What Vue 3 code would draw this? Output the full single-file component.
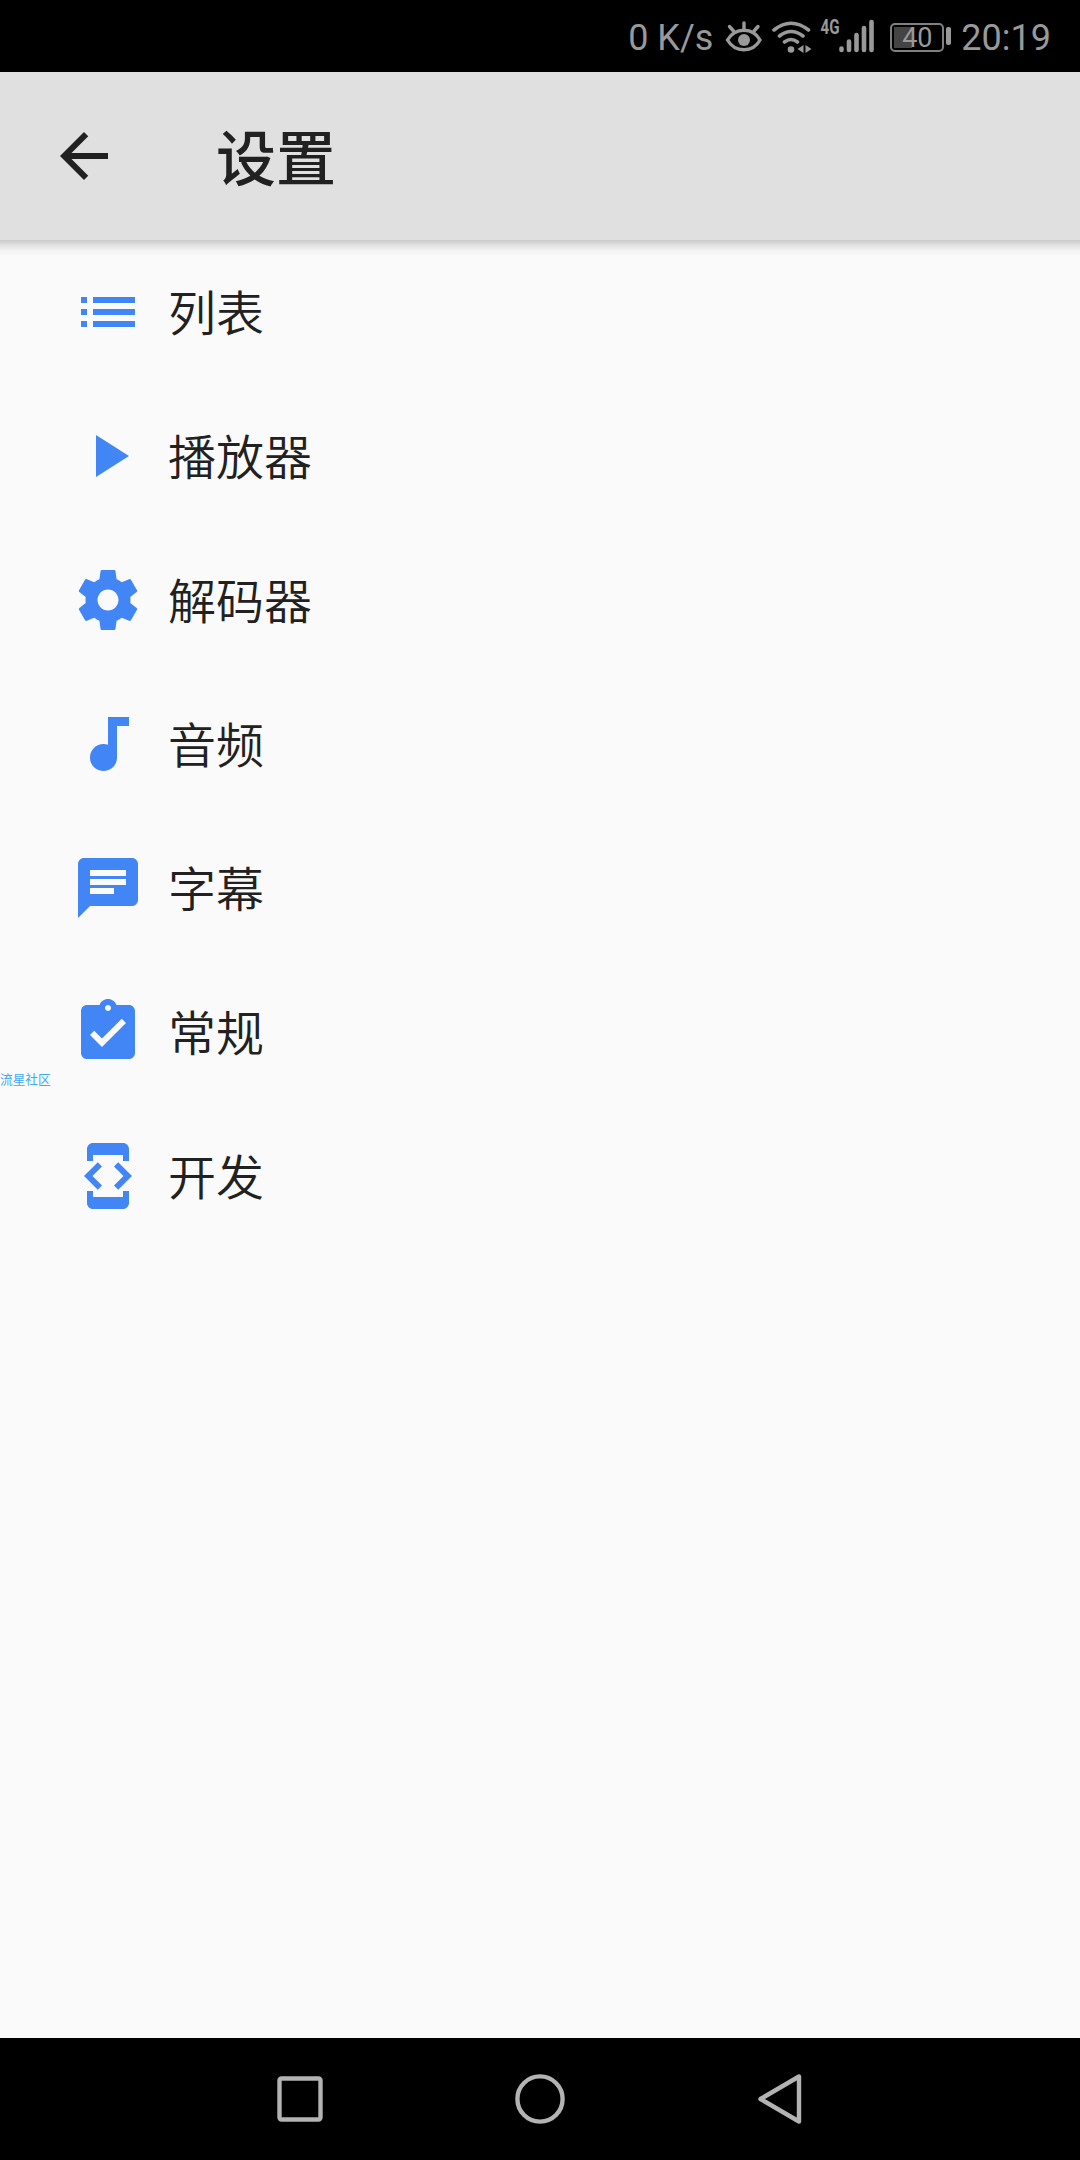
<script setup>
import { ref } from 'vue';

const items = ref([
  {
    label: '列表',
    path: 'M3 13h2v-2H3v2zm0 4h2v-2H3v2zm0-8h2V7H3v2zm4 4h14v-2H7v2zm0 4h14v-2H7v2zM7 7v2h14V7H7z',
  },
  {
    label: '播放器',
    path: 'M8 5v14l11-7z',
  },
  {
    label: '解码器',
    path: 'M19.43 12.98c.04-.32.07-.64.07-.98s-.03-.66-.07-.98l2.11-1.65c.19-.15.24-.42.12-.64l-2-3.46c-.12-.22-.39-.3-.61-.22l-2.49 1c-.52-.4-1.08-.73-1.69-.98l-.38-2.65C14.46 2.18 14.25 2 14 2h-4c-.25 0-.46.18-.49.42l-.38 2.65c-.61.25-1.17.59-1.69.98l-2.49-1c-.23-.09-.49 0-.61.22l-2 3.46c-.13.22-.07.49.12.64l2.11 1.65c-.04.32-.07.65-.07.98s.03.66.07.98l-2.11 1.65c-.19.15-.24.42-.12.64l2 3.46c.12.22.39.3.61.22l2.49-1c.52.4 1.08.73 1.69.98l.38 2.65c.03.24.24.42.49.42h4c.25 0 .46-.18.49-.42l.38-2.65c.61-.25 1.17-.59 1.69-.98l2.49 1c.23.09.49 0 .61-.22l2-3.46c.12-.22.07-.49-.12-.64l-2.11-1.65zM12 15.5c-1.93 0-3.5-1.57-3.5-3.5s1.57-3.5 3.5-3.5 3.5 1.57 3.5 3.5-1.57 3.5-3.5 3.5z',
  },
  {
    label: '音频',
    path: 'M12 3v9.26c-.5-.17-1-.26-1.5-.26C8 12 6 14 6 16.5S8 21 10.5 21s4.5-2 4.5-4.5V6h4V3h-7z',
  },
  {
    label: '字幕',
    path: 'M20 2H4c-1.1 0-1.99.9-1.99 2L2 22l4-4h14c1.1 0 2-.9 2-2V4c0-1.1-.9-2-2-2zM6 9h12v2H6V9zm8 5H6v-2h8v2zm4-6H6V6h12v2z',
  },
  {
    label: '常规',
    path: 'M19 3h-4.18C14.4 1.84 13.3 1 12 1c-1.3 0-2.4.84-2.82 2H5c-1.1 0-2 .9-2 2v14c0 1.1.9 2 2 2h14c1.1 0 2-.9 2-2V5c0-1.1-.9-2-2-2zm-7 0c.55 0 1 .45 1 1s-.45 1-1 1-1-.45-1-1 .45-1 1-1zm-2 14l-4-4 1.41-1.41L10 14.17l6.59-6.59L18 9l-8 8z',
  },
  {
    label: '开发',
    path: 'M7 5h10v2h2V3c0-1.1-.9-1.99-2-1.99L7 1c-1.1 0-2 .9-2 2v4h2V5zm8.41 11.59L20 12l-4.59-4.59L14 8.83 17.17 12 14 15.17l1.41 1.42zM10 15.17L6.83 12 10 8.83 8.59 7.41 4 12l4.59 4.59L10 15.17zM17 19H7v-2H5v4c0 1.1.9 2 2 2h10c1.1 0 2-.9 2-2v-4h-2v2z',
  },
]);
</script>

<template>
  <div class="screen">
    <div class="status-bar">
      <span class="speed">0 K/s</span>
      <svg class="eye" width="38" height="34" viewBox="0 0 38 34">
        <path d="M2.5 21C10 8 28 8 35 21C28 34 10 34 2.5 21Z" />
        <path d="M19 10V4M8.5 12L4.500 7.500M29 12L33 7.500" />
        <circle cx="19" cy="21" r="6" />
      </svg>
      <svg class="wifi" width="42" height="34" viewBox="0 0 42 34">
        <path d="M3 10Q20 -3.500 37.500 10M8.500 16Q20 7 32 16M13.500 22Q20 17 26.500 22" />
        <circle cx="20" cy="29.500" r="3.300" />
        <path class="arrows" d="M32.500 25v8l-6-4zM34.500 25v8l6-4z" />
      </svg>
      <svg class="signal" width="56" height="48" viewBox="0 -6 56 48">
        <text x="0.5" y="16" textLength="19" lengthAdjust="spacingAndGlyphs">4G</text>
        <path d="M21.500 30.500v1.500M29 23.500v8.500M36.500 17v15M44 10v22M51.500 4v28" />
      </svg>
      <div class="battery">
        <div class="level"></div>
        <span>40</span>
      </div>
      <div class="battery-tip"></div>
      <span class="time">20:19</span>
    </div>

    <header class="toolbar">
      <svg class="back" viewBox="0 0 24 24">
        <path d="M20 11H7.830l5.590-5.590L12 4l-8 8 8 8 1.410-1.410L7.830 13H20v-2z" />
      </svg>
      <h1>设置</h1>
    </header>

    <ul class="list">
      <li v-for="item in items" :key="item.label" class="item">
        <svg viewBox="0 0 24 24"><path :d="item.path" /></svg>
        <span>{{ item.label }}</span>
      </li>
    </ul>

    <div class="watermark">流星社区</div>

    <nav class="nav-bar">
      <svg viewBox="0 0 60 60"><rect x="9.500" y="9.500" width="41" height="41" rx="2" /></svg>
      <svg viewBox="0 0 60 60"><circle cx="30" cy="30" r="22.600" /></svg>
      <svg viewBox="0 0 60 60"><path d="M10.500 30L49 7.500V52.500Z" /></svg>
    </nav>
  </div>
</template>

<style>
body {
  margin: 0;
}
</style>

<style scoped>
.screen {
  position: relative;
  display: flex;
  flex-direction: column;
  width: 1080px;
  height: 2160px;
  overflow: hidden;
  background: #fafafa;
  color: #212121;
  font-family: Roboto, "Noto Sans CJK SC", sans-serif;
}

.status-bar {
  display: flex;
  align-items: center;
  justify-content: flex-end;
  box-sizing: border-box;
  height: 72px;
  padding-right: 29px;
  background: #000;
  color: #999;
  font-size: 36px;
  line-height: 68px;
  white-space: nowrap;
}

.status-bar > * {
  flex: none;
}

.speed,
.time {
  padding-top: 4px;
}

.eye {
  margin: 0 0 0 12px;
}

.wifi {
  margin: 2px 0 0 8px;
}

.eye path,
.wifi path,
.signal path {
  fill: none;
  stroke: #999;
  stroke-width: 3.6;
  stroke-linecap: round;
}

.eye path {
  stroke-width: 3.4;
}

.eye circle,
.wifi circle {
  fill: #999;
}

.wifi .arrows {
  fill: #999;
  stroke: none;
}

.signal {
  margin-left: 7px;
}

.signal path {
  stroke-width: 4.6;
}

.signal text {
  fill: #999;
  font-size: 20px;
  font-weight: 700;
}

.battery {
  position: relative;
  box-sizing: border-box;
  width: 54px;
  height: 29px;
  margin: 2px 2px 0 14px;
  border: 2px solid #808080;
  border-radius: 5px;
  font-size: 27px;
  line-height: 26px;
  text-align: center;
}

.battery span {
  position: relative;
}

.level {
  position: absolute;
  top: 2px;
  left: 2px;
  width: 18px;
  height: 21px;
  background: #444;
}

.battery-tip {
  width: 5px;
  height: 18px;
  margin-right: 10px;
  border-radius: 2px;
  background: #999;
}

.toolbar {
  display: flex;
  align-items: center;
  height: 168px;
  padding-left: 48px;
  background: #e0e0e0;
}

.back {
  width: 72px;
  height: 72px;
  margin-right: 96px;
  fill: #212121;
}

.toolbar h1 {
  margin: 10px 0 0;
  font-size: 60px;
  font-weight: 500;
  line-height: 84px;
}

.list {
  flex: 1;
  margin: 0;
  padding: 0;
  list-style: none;
  background: linear-gradient(#cacaca, #e4e4e4 6px, #f4f4f4 11px, #fafafa 17px);
}

.item {
  display: flex;
  align-items: center;
  height: 144px;
  padding-left: 72px;
  font-size: 48px;
}

.item svg {
  width: 72px;
  height: 72px;
  margin-right: 24px;
  fill: #4285f4;
}

.item span {
  padding-bottom: 5px;
  font-weight: 350;
}

.watermark {
  position: absolute;
  top: 1071px;
  left: 0;
  color: #3fa9f5;
  font-size: 12.7px;
  line-height: 18px;
}

.nav-bar {
  display: flex;
  align-items: center;
  justify-content: center;
  gap: 180px;
  height: 122px;
  background: #000;
}

.nav-bar svg {
  width: 60px;
  height: 60px;
  fill: none;
  stroke: #b3b3b3;
  stroke-width: 4.4;
  stroke-linejoin: round;
}
</style>
